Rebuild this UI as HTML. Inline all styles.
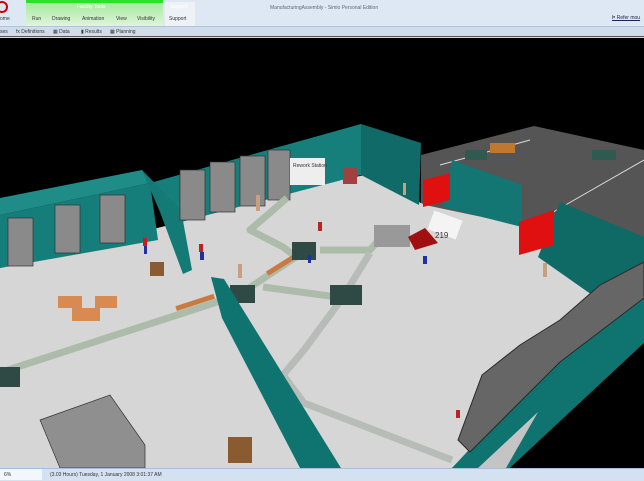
<!DOCTYPE html><html><head><style>
body{margin:0;width:644px;height:480px;overflow:hidden;font-family:"Liberation Sans",sans-serif;font-size:5px;background:#000}
.top{position:absolute;left:0;top:0;width:644px;height:37px;background:#dde8f4}
.t{position:absolute;color:#333;white-space:nowrap}
.status{position:absolute;left:0;top:468px;width:644px;height:12px;background:#d4e1f0;border-top:1px solid #a8bdd6}
</style></head><body>
<div class="top">
<div style="position:absolute;width:8px;height:8px;border:2px solid #c00;border-radius:50%;left:-4px;top:1px"></div>
<div style="position:absolute;left:26px;top:0;width:137px;height:3px;background:#2ee02e"></div>
<div style="position:absolute;left:26px;top:3px;width:137px;height:23px;background:linear-gradient(#a6eaa0,#e0f4dc)"></div>
<div style="position:absolute;left:165px;top:2px;width:30px;height:24px;background:#eef2f7"></div>
<div class="t" style="left:77px;top:4px;color:#fff">Facility Tools</div>
<div class="t" style="left:170px;top:4px;color:#fff">Support</div>
<div class="t" style="left:270px;top:5px;color:#667">ManufacturingAssembly - Simio Personal Edition</div>
<div class="t" style="left:0;top:16px">ome</div>
<div class="t" style="left:32px;top:16px">Run</div><div class="t" style="left:52px;top:16px">Drawing</div>
<div class="t" style="left:82px;top:16px">Animation</div><div class="t" style="left:116px;top:16px">View</div>
<div class="t" style="left:137px;top:16px">Visibility</div><div class="t" style="left:169px;top:16px">Support</div>
<div class="t" style="left:612px;top:15px;color:#225;text-decoration:underline">Þ Refer mou</div>
<div style="position:absolute;left:0;top:26px;width:644px;height:11px;background:#cfdced;border-top:1px solid #b0c4dc"></div>
<div class="t" style="left:0;top:29px">ses</div><div class="t" style="left:16px;top:29px">fx Definitions</div>
<div class="t" style="left:53px;top:29px">▦ Data</div><div class="t" style="left:81px;top:29px">▮ Results</div>
<div class="t" style="left:110px;top:29px">▦ Planning</div>
<div style="position:absolute;left:0;top:36px;width:644px;height:1px;background:#555"></div>
</div>
<svg style="position:absolute;left:0;top:37px" width="644" height="431" viewBox="0 37 644 431">
<polygon points="421,155 534,126 644,150 644,240 421,212" fill="#555"/>
<line x1="440" y1="165" x2="530" y2="140" stroke="#ddd"/><line x1="548" y1="215" x2="644" y2="160" stroke="#ddd"/>
<rect x="490" y="143" width="25" height="10" fill="#c07830"/><rect x="465" y="150" width="22" height="10" fill="#2f5a50"/><rect x="592" y="150" width="24" height="10" fill="#2f5a50"/>
<polygon points="0,268 181,222 300,188 365,175 425,205 520,225 600,250 644,262 644,300 452,468 0,468" fill="#d6d6d6"/>
<polygon points="0,198 142,170 150,183 0,215" fill="#1f8c88"/>
<polygon points="0,215 150,183 158,240 0,268" fill="#157e7a"/>
<polygon points="150,183 361,124 361,175 181,222" fill="#177f7b"/>
<polygon points="361,124 421,143 419,205 361,175" fill="#0f6a68"/>
<polygon points="142,170 181,210 192,270 183,274 160,212" fill="#137a76"/>
<polygon points="452,160 522,185 522,227 443,207" fill="#137672"/>
<polygon points="560,202 644,237 644,270 595,297 538,257" fill="#0f6a66"/>
<g fill="#8a8a8a" stroke="#333" stroke-width="0.7">
<rect x="8" y="218" width="25" height="48"/><rect x="55" y="205" width="25" height="48"/><rect x="100" y="195" width="25" height="48"/>
<rect x="180" y="170" width="25" height="50"/><rect x="210" y="162" width="25" height="50"/><rect x="240" y="156" width="25" height="50"/><rect x="268" y="150" width="22" height="50"/>
</g>
<rect x="290" y="158" width="35" height="27" fill="#eee"/><text x="293" y="167" font-size="5" fill="#333">Rework Station</text>
<g fill="none" stroke="#adbcaa" stroke-width="7" stroke-linejoin="round">
<polyline points="8,370 214,303 246,290 296,257 283,247 250,230 287,198"/>
<polyline points="263,287 337,297"/>
<polyline points="320,250 370,250 390,227"/>
<polyline points="370,253 341,300 304,350 283,375 304,403 452,460" stroke="#b8bcb8"/>
</g>
<rect x="175" y="300" width="40" height="5" fill="#c87a40" transform="rotate(-18 195 302)"/>
<rect x="265" y="262" width="35" height="5" fill="#c87a40" transform="rotate(-32 282 265)"/>
<rect x="230" y="285" width="25" height="18" fill="#2f4a44"/><rect x="330" y="285" width="32" height="20" fill="#2f4a44"/><rect x="292" y="242" width="24" height="18" fill="#2f4a44"/>
<rect x="374" y="225" width="36" height="22" fill="#999"/><polygon points="408,237 425,228 438,243 415,250" fill="#a01010"/>
<rect x="0" y="367" width="20" height="20" fill="#2f4a44"/>
<g fill="#d98a50"><rect x="58" y="296" width="24" height="12"/><rect x="72" y="308" width="28" height="13"/><rect x="95" y="296" width="22" height="12"/></g>
<rect x="150" y="262" width="14" height="14" fill="#8a5a30"/><rect x="228" y="437" width="24" height="26" fill="#8a5a30"/>
<polygon points="423,180 450,173 450,200 423,207" fill="#e01010"/><polygon points="519,222 554,210 554,245 519,255" fill="#e01010"/>
<polygon points="211,277 224,279 341,468 300,468 222,318" fill="#0f7470"/>
<polygon points="644,262 644,343 510,468 452,468" fill="#0f7470"/>
<polygon points="458,440 482,375 520,345 560,320 600,285 644,262 644,298 560,362 470,452" fill="#666" stroke="#2a2a2a" stroke-width="1"/>
<polygon points="538,412 478,468 506,468" fill="#c4c4c4"/>
<polygon points="510,468 644,343 644,468" fill="#000"/>
<polygon points="40,420 110,395 145,445 145,468 60,468" fill="#8f8f8f" stroke="#333" stroke-width="0.7"/>
<g fill="#c02020"><rect x="143" y="238" width="4" height="8"/><rect x="199" y="244" width="4" height="8"/><rect x="318" y="222" width="4" height="9"/><rect x="456" y="410" width="4" height="8"/></g>
<g fill="#2030a0"><rect x="144" y="246" width="3" height="8"/><rect x="200" y="252" width="4" height="8"/><rect x="423" y="256" width="4" height="8"/><rect x="308" y="255" width="3" height="8"/></g>
<g fill="#c8a080"><rect x="256" y="195" width="4" height="16"/><rect x="238" y="264" width="4" height="14"/><rect x="543" y="263" width="4" height="14"/><rect x="403" y="183" width="3" height="12"/></g>
<rect x="343" y="168" width="14" height="16" fill="#a04040"/>
<rect x="430" y="215" width="30" height="20" fill="#f4f4f4" transform="rotate(20 445 225)"/><text x="435" y="238" font-size="8" fill="#333">219</text>
</svg>
<div class="status">
<div style="position:absolute;left:0;top:0;width:42px;height:11px;background:#f3f6fa"></div>
<div class="t" style="left:4px;top:3px">6%</div>
<div class="t" style="left:50px;top:3px">(3.03 Hours) Tuesday, 1 January 2008 3:01:37 AM</div>
</div>
</body></html>
